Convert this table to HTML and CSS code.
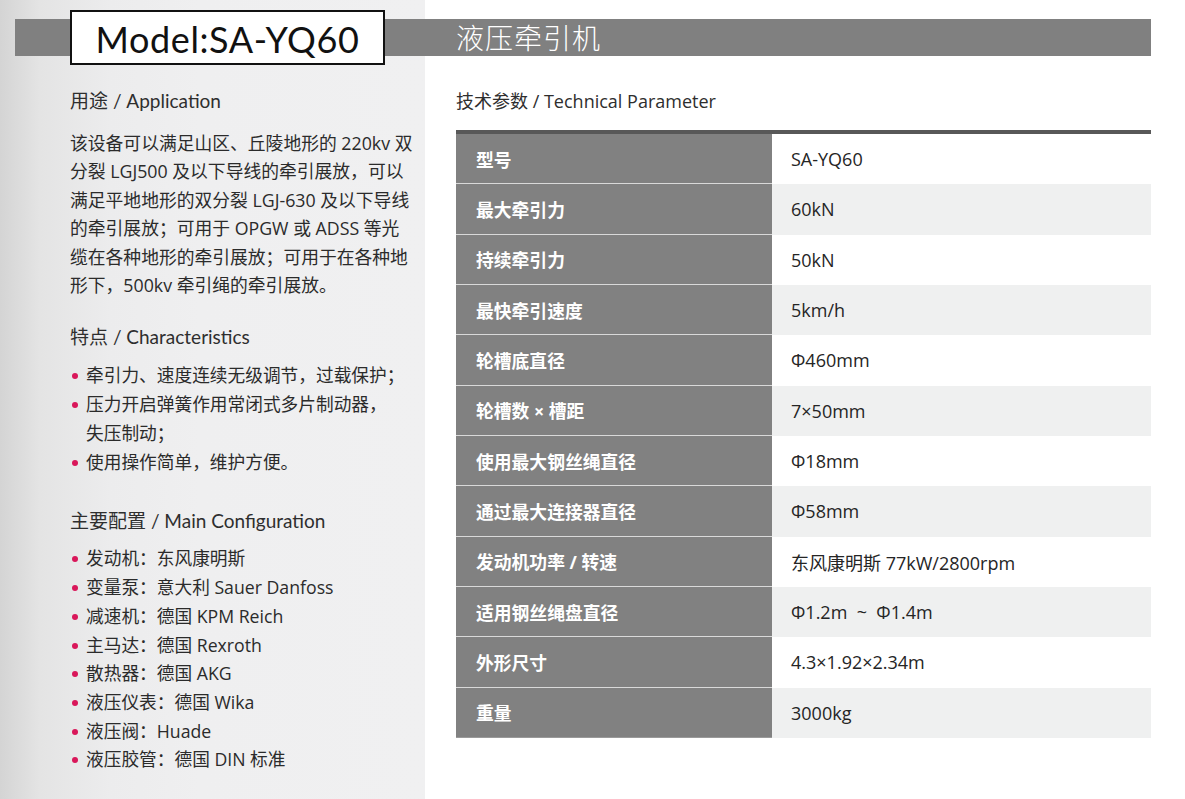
FILE: index.html
```html
<!DOCTYPE html>
<html lang="zh-CN">
<head>
<meta charset="utf-8">
<title>SA-YQ60 液压牵引机</title>
<link rel="stylesheet" href="styles.css">
</head>
<body>
<div class="page">
  <header class="header">
    <div class="model">Model:SA-YQ60</div>
    <h1 class="title">液压牵引机</h1>
  </header>
  <div class="cols">
    <aside class="side">
      <h2 class="sec">用途 <span class="en">/ Application</span></h2>
      <p class="desc">该设备可以满足山区、丘陵地形的 220kv 双<br>分裂 LGJ500 及以下导线的牵引展放，可以<br>满足平地地形的双分裂 LGJ-630 及以下导线<br>的牵引展放；可用于 OPGW 或 ADSS 等光<br>缆在各种地形的牵引展放；可用于在各种地<br>形下，500kv 牵引绳的牵引展放。</p>

      <h2 class="sec sec-2">特点 <span class="en">/ Characteristics</span></h2>
      <ul class="list feats">
        <li>牵引力、速度连续无级调节，过载保护；</li>
        <li>压力开启弹簧作用常闭式多片制动器，<br>失压制动；</li>
        <li>使用操作简单，维护方便。</li>
      </ul>

      <h2 class="sec sec-3">主要配置 <span class="en">/ Main Configuration</span></h2>
      <ul class="list conf">
        <li>发动机：东风康明斯</li>
        <li>变量泵：意大利 Sauer Danfoss</li>
        <li>减速机：德国 KPM Reich</li>
        <li>主马达：德国 Rexroth</li>
        <li>散热器：德国 AKG</li>
        <li>液压仪表：德国 Wika</li>
        <li>液压阀：Huade</li>
        <li>液压胶管：德国 DIN 标准</li>
      </ul>
    </aside>
    <main class="main">
      <h2 class="sec tech">技术参数 / Technical Parameter</h2>
      <div class="spec">
        <div class="row"><div class="k">型号</div><div class="v">SA-YQ60</div></div>
        <div class="row"><div class="k">最大牵引力</div><div class="v">60kN</div></div>
        <div class="row"><div class="k">持续牵引力</div><div class="v">50kN</div></div>
        <div class="row"><div class="k">最快牵引速度</div><div class="v">5km/h</div></div>
        <div class="row"><div class="k">轮槽底直径</div><div class="v">Φ460mm</div></div>
        <div class="row"><div class="k">轮槽数 × 槽距</div><div class="v">7×50mm</div></div>
        <div class="row"><div class="k">使用最大钢丝绳直径</div><div class="v">Φ18mm</div></div>
        <div class="row"><div class="k">通过最大连接器直径</div><div class="v">Φ58mm</div></div>
        <div class="row"><div class="k">发动机功率 / 转速</div><div class="v">东风康明斯 77kW/2800rpm</div></div>
        <div class="row"><div class="k">适用钢丝绳盘直径</div><div class="v">Φ1.2m&nbsp; ~ &nbsp;Φ1.4m</div></div>
        <div class="row"><div class="k">外形尺寸</div><div class="v">4.3×1.92×2.34m</div></div>
        <div class="row"><div class="k">重量</div><div class="v">3000kg</div></div>
      </div>
    </main>
  </div>
</div>
</body>
</html>
```

FILE: styles.css
```css
* { box-sizing: border-box; }
html, body { margin: 0; padding: 0; }
body {
  width: 1185px;
  height: 799px;
  overflow: hidden;
  font-family: "Open Sans", "Noto Sans CJK SC", sans-serif;
  color: #2b2b2b;
  background: #fff;
}
.page {
  width: 1185px;
  height: 799px;
  padding-top: 10px;
  background:
    linear-gradient(to right, #d4d4d4 0px, #e4e4e4 40px, #ececed 110px, #efeff0 200px, #f0f0f1 425px) 0 0 / 425px 100% no-repeat,
    #fff;
}
.header {
  display: flex;
  align-items: center;
  margin-left: 15px;
  width: 1136px;
  height: 55px;
  background: linear-gradient(#808080, #808080) 0 9px / 100% 37px no-repeat;
}
.model {
  margin-left: 55px;
  width: 315px;
  height: 55px;
  border: 2px solid #111;
  background: #fff;
  display: flex;
  align-items: center;
  justify-content: center;
  font-family: "Lato", "Noto Sans", sans-serif;
  font-size: 36px;
  color: #111;
  letter-spacing: 0.6px;
  padding-top: 3px;
}
.title {
  margin: 0 0 0 71px;
  font-family: "Noto Sans CJK SC", sans-serif;
  font-weight: 300;
  font-size: 28px;
  line-height: 37px;
  color: #fff;
  letter-spacing: 1px;
}
.cols {
  display: grid;
  grid-template-columns: 425px 1fr;
}
.side {
  padding: 22px 0 0 70px;
}
.sec {
  margin: 0;
  font-weight: 400;
  font-size: 19px;
  line-height: 28px;
  color: #2e2e2e;
  font-family: "Lato", "Noto Sans CJK SC", sans-serif;
}
.sec .en { font-family: "Lato", sans-serif; }
.desc {
  margin: 14px 0 0;
  font-size: 17.8px;
  line-height: 28.4px;
  color: #2b2b2b;
  white-space: nowrap;
}
.sec-2 { margin-top: 24px; }
.sec-3 { margin-top: 30px; }
.list {
  list-style: none;
  margin: 0;
  padding: 0;
  font-size: 17.7px;
  color: #2b2b2b;
  white-space: nowrap;
}
.list li {
  position: relative;
  padding-left: 16px;
}
.list li::before {
  content: "";
  position: absolute;
  left: 2px;
  top: 12px;
  width: 6px;
  height: 6px;
  border-radius: 50%;
  background: #d9175a;
}
.feats { margin-top: 10px; line-height: 29px; }
.conf { margin-top: 9px; line-height: 28.7px; }
.main {
  padding: 22px 34px 0 31px;
}
.tech {
  font-family: "Open Sans", "Noto Sans CJK SC", sans-serif;
  font-size: 18px;
}
.spec {
  margin-top: 15px;
  border-top: 4px solid #585858;
  height: 608px;
  display: grid;
  grid-template-rows: repeat(12, 1fr);
}
.row {
  display: grid;
  grid-template-columns: 316px 1fr;
}
.row:nth-child(even) .v { background: #eff0f0; }
.k {
  background: #818181;
  border-bottom: 1px solid #d9d9d9;
  color: #fff;
  font-weight: 700;
  font-size: 17.8px;
  padding-left: 20px;
  display: flex;
  align-items: center;
}
.row:last-child .k { border-bottom: 1px solid #9a9a9a; }
.v {
  background: #fff;
  color: #252525;
  font-size: 18px;
  padding-left: 19px;
  display: flex;
  align-items: center;
}
```
